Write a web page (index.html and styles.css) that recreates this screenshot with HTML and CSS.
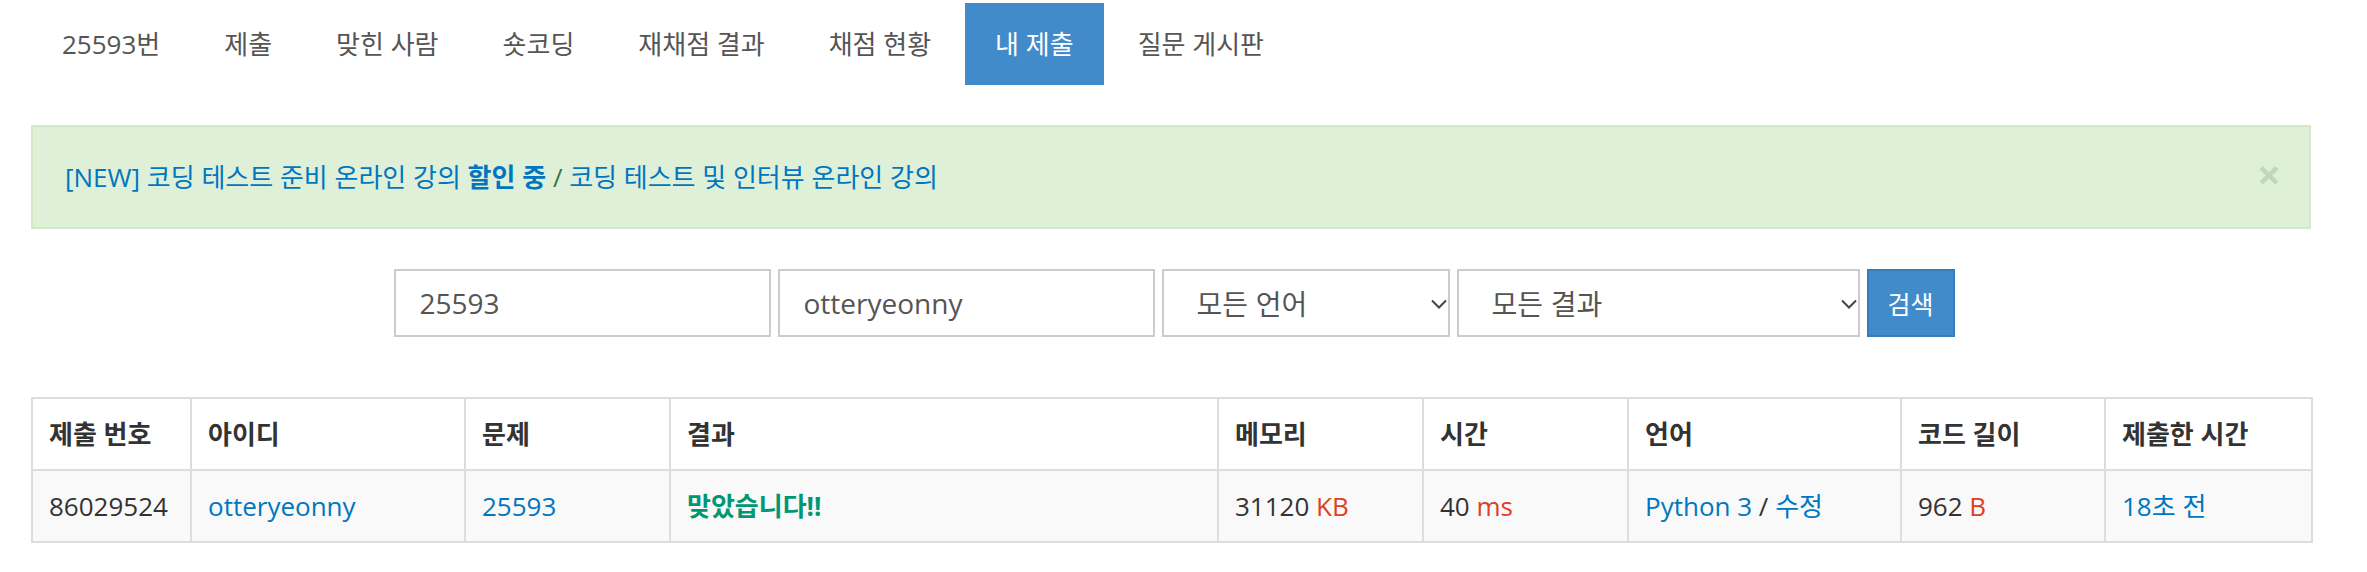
FILE: index.html
```html
<!DOCTYPE html>
<html lang="ko">
<head>
<meta charset="utf-8">
<title>내 제출</title>
<link rel="stylesheet" href="styles.css">
</head>
<body>
<div class="page">
  <ul class="tabs">
    <li><a href="#">25593<span class="ko">번</span></a></li>
    <li><a href="#" class="ko">제출</a></li>
    <li><a href="#" class="ko">맞힌 사람</a></li>
    <li><a href="#" class="ko">숏코딩</a></li>
    <li><a href="#" class="ko">재채점 결과</a></li>
    <li><a href="#" class="ko">채점 현황</a></li>
    <li class="active"><a href="#" class="ko">내 제출</a></li>
    <li><a href="#" class="ko">질문 게시판</a></li>
  </ul>

  <div class="alert">
    <p class="alert-text"><a href="#" class="lnk">[NEW] <span class="ko">코딩 테스트 준비 온라인 강의 <b>할인 중</b></span></a> / <a href="#" class="lnk ko">코딩 테스트 및 인터뷰 온라인 강의</a></p>
    <button class="close" type="button">×</button>
  </div>

  <form class="search">
    <input class="field w-problem" type="text" value="25593">
    <input class="field w-user" type="text" value="otteryeonny">
    <div class="select w-lang">
      <select><option>모든 언어</option></select>
      <svg class="chev" width="16" height="10" viewBox="0 0 16 10"><path d="M1 1.5 L8 8.5 L15 1.5" fill="none" stroke="#444" stroke-width="2"/></svg>
    </div>
    <div class="select w-result">
      <select><option>모든 결과</option></select>
      <svg class="chev" width="16" height="10" viewBox="0 0 16 10"><path d="M1 1.5 L8 8.5 L15 1.5" fill="none" stroke="#444" stroke-width="2"/></svg>
    </div>
    <button class="btn" type="button">검색</button>
  </form>

  <table class="status">
    <thead>
      <tr>
        <th class="c1">제출 번호</th>
        <th class="c2">아이디</th>
        <th class="c3">문제</th>
        <th class="c4">결과</th>
        <th class="c5">메모리</th>
        <th class="c6">시간</th>
        <th class="c7">언어</th>
        <th class="c8">코드 길이</th>
        <th class="c9">제출한 시간</th>
      </tr>
    </thead>
    <tbody>
      <tr>
        <td>86029524</td>
        <td><a href="#" class="lnk">otteryeonny</a></td>
        <td><a href="#" class="lnk">25593</a></td>
        <td><span class="ac"><span class="ko">맞았습니다</span>!!</span></td>
        <td>31120 <span class="unit">KB</span></td>
        <td>40 <span class="unit">ms</span></td>
        <td><a href="#" class="lnk">Python 3</a> / <a href="#" class="lnk ko">수정</a></td>
        <td>962 <span class="unit">B</span></td>
        <td><a href="#" class="lnk">18<span class="ko">초 전</span></a></td>
      </tr>
    </tbody>
  </table>
</div>
</body>
</html>
```

FILE: styles.css
```css
* { box-sizing: border-box; }

html, body {
  margin: 0;
  padding: 0;
  background: #ffffff;
}

body {
  font-family: "Open Sans", "Noto Sans CJK KR", sans-serif;
  font-size: 26px;
  line-height: 40px;
  color: #333333;
}

.ko { font-size: 26px; }

a { text-decoration: none; }

.page {
  width: 2280px;
  margin-left: 31px;
  padding-top: 3px;
}

/* tabs */
.tabs {
  display: flex;
  list-style: none;
  margin: 0;
  padding: 0 0 0 1px;
}
.tabs li + li { margin-left: 4px; }
.tabs a {
  display: block;
  height: 82px;
  padding: 21px 30px;
  color: #555555;
  line-height: 40px;
}
.tabs .active a {
  background: #428bca;
  color: #ffffff;
}

/* alert */
.alert {
  margin-top: 40px;
  height: 104px;
  display: flex;
  align-items: center;
  justify-content: space-between;
  background: #dff0d8;
  border: 2px solid #d6e9c6;
  padding: 0 28px 0 32px;
  color: #3c763d;
}
.alert-text { margin: 0; }
.lnk { color: #0076c0; }
.alert b { font-weight: 700; }
.close {
  border: 0;
  background: transparent;
  padding: 0;
  margin: 0 0 6px 0;
  font-family: "Open Sans", sans-serif;
  font-size: 42px;
  font-weight: 700;
  line-height: 40px;
  color: #bed8b9;
}

/* search form */
.search {
  margin-top: 40px;
  display: flex;
  justify-content: center;
  gap: 7px;
  padding-left: 6px;
}
.field {
  height: 68px;
  border: 2px solid #cccccc;
  padding: 0 24px;
  font-family: "Open Sans", sans-serif;
  font-size: 28px;
  color: #555555;
  background: #ffffff;
  outline: none;
}
.w-problem, .w-user { width: 377px; }
.select { position: relative; height: 68px; }
.w-lang { width: 288px; }
.w-result { width: 403px; }
.select select {
  appearance: none;
  -webkit-appearance: none;
  width: 100%;
  height: 68px;
  border: 2px solid #cccccc;
  border-radius: 0;
  padding: 0 0 0 33px;
  background: #ffffff;
  font-family: "Noto Sans CJK KR", sans-serif;
  font-size: 28px;
  color: #555555;
  outline: none;
}
.chev {
  position: absolute;
  right: 3px;
  top: 30px;
}
.btn {
  width: 88px;
  height: 68px;
  background: #428bca;
  border: 2px solid #357ebd;
  color: #ffffff;
  font-family: "Noto Sans CJK KR", sans-serif;
  font-size: 25px;
  padding: 0;
}

/* table */
.status {
  margin-top: 60px;
  width: 2280px;
  border-collapse: collapse;
  table-layout: fixed;
}
.status th, .status td {
  border: 2px solid #dddddd;
  padding: 15px 16px;
  text-align: left;
  line-height: 40px;
  white-space: nowrap;
}
.status th {
  font-size: 26px;
  font-weight: 700;
  color: #333333;
  background: #ffffff;
}
.status tbody td { background: #f9f9f9; }
.c1 { width: 159px; }
.c2 { width: 274px; }
.c3 { width: 205px; }
.c4 { width: 548px; }
.c5 { width: 205px; }
.c6 { width: 205px; }
.c7 { width: 273px; }
.c8 { width: 204px; }
.c9 { width: 207px; }

.ac { color: #009874; font-weight: 700; }
.unit { color: #dd4124; }
```
